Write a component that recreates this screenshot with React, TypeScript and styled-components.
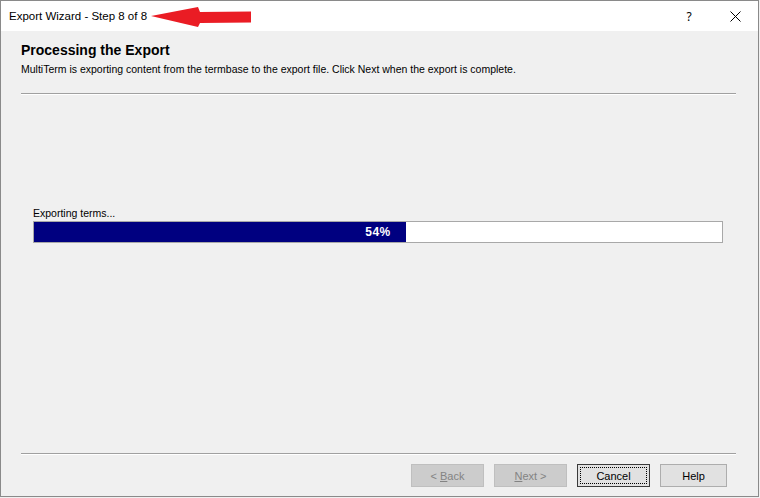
import React from "react";
import styled, { createGlobalStyle } from "styled-components";

const Global = createGlobalStyle`
  html, body { margin: 0; padding: 0; background: #f0f0f0; }
  body { width: 760px; height: 498px; overflow: hidden; }
  #root { width: 760px; height: 498px; }
`;

const Window = styled.div`
  box-sizing: border-box;
  width: 759px;
  height: 497px;
  border: 1px solid #8a8a8a;
  display: flex;
  flex-direction: column;
  background: #f0f0f0;
  font-family: "Liberation Sans", Arial, sans-serif;
  color: #000;
`;

const TitleBar = styled.div`
  height: 30px;
  flex: none;
  background: #ffffff;
  display: flex;
  align-items: center;
  padding-left: 8px;
`;

const TitleText = styled.span`
  font-family: "Liberation Sans", Arial, sans-serif;
  font-size: 11.5px;
  color: #000;
`;

const Arrow = styled.svg`
  margin-left: 3px;
  flex: none;
`;

const TitleButtons = styled.div`
  margin-left: auto;
  display: flex;
  height: 100%;
`;

const CaptionButton = styled.div`
  width: 46px;
  height: 100%;
  display: flex;
  align-items: center;
  justify-content: center;
  font-family: "Noto Sans", sans-serif;
  font-size: 12px;
  color: #000;
`;

const Body = styled.div`
  flex: 1;
  display: flex;
  flex-direction: column;
  padding: 0 22px 0 20px;
`;

const Header = styled.div`
  padding-top: 11px;
`;

const Heading = styled.h1`
  margin: 0;
  font-size: 14px;
  line-height: 17px;
  font-weight: bold;
`;

const Subtitle = styled.p`
  margin: 4px 0 0;
  font-size: 10.5px;
  line-height: 13px;
`;

const Rule = styled.div`
  height: 1px;
  background: #a0a0a0;
  border-bottom: 1px solid #ffffff;
`;

const HeaderRule = styled(Rule)`
  margin-top: 17px;
`;

const Content = styled.div`
  flex: 1;
  padding: 112px 13px 0 12px;
`;

const Label = styled.div`
  font-size: 10.5px;
  line-height: 13px;
  margin-bottom: 1px;
`;

const Track = styled.div`
  position: relative;
  box-sizing: border-box;
  height: 22px;
  border: 1px solid #a8a8a8;
  background: #ffffff;
  display: flex;
`;

const Fill = styled.div`
  height: 100%;
  background: #000080;
`;

const Percent = styled.span`
  position: absolute;
  inset: 0;
  display: flex;
  align-items: center;
  justify-content: center;
  color: #ffffff;
  font-size: 12px;
  font-weight: bold;
  letter-spacing: 0.5px;
`;

const Footer = styled.div`
  display: flex;
  justify-content: flex-end;
  gap: 10px;
  padding: 9px 9px 9px 0;
`;

const Button = styled.button<{ $w?: number; $default?: boolean }>`
  box-sizing: border-box;
  width: ${(p) => p.$w ?? 73}px;
  height: 23px;
  padding: 0;
  font-family: "Liberation Sans", Arial, sans-serif;
  font-size: 11px;
  background: #e1e1e1;
  color: #000;
  border: 1px solid ${(p) => (p.$default ? "#3a3a3a" : "#adadad")};
  position: relative;
  &:disabled {
    background: #cccccc;
    border-color: #bfbfbf;
    color: #838383;
  }
  ${(p) =>
    p.$default &&
    `
    &::after {
      content: "";
      position: absolute;
      inset: 2px;
      border: 1px dotted #000;
    }
  `}
`;

const Key = styled.span`
  text-decoration: underline;
`;

export default function App() {
  const progress = 54;
  return (
    <>
      <Global />
      <Window>
        <TitleBar>
          <TitleText>Export Wizard - Step 8 of 8</TitleText>
          <Arrow width="102" height="24" viewBox="0 0 102 24">
            <path d="M1 12 L48 3 L50 8 L101 7.5 L101 18.5 L50 19 L48 23 Z" fill="#ea1c24" />
          </Arrow>
          <TitleButtons>
            <CaptionButton>?</CaptionButton>
            <CaptionButton>
              <svg width="11" height="11" viewBox="0 0 11 11">
                <path d="M0.5 0.5 L10.5 10.5 M10.5 0.5 L0.5 10.5" stroke="#000" strokeWidth="1" />
              </svg>
            </CaptionButton>
          </TitleButtons>
        </TitleBar>
        <Body>
          <Header>
            <Heading>Processing the Export</Heading>
            <Subtitle>
              MultiTerm is exporting content from the termbase to the export file. Click Next when the export is complete.
            </Subtitle>
            <HeaderRule />
          </Header>
          <Content>
            <Label>Exporting terms...</Label>
            <Track>
              <Fill style={{ width: `${progress}%` }} />
              <Percent>{progress}%</Percent>
            </Track>
          </Content>
          <Rule />
          <Footer>
            <Button disabled>
              &lt; <Key>B</Key>ack
            </Button>
            <Button disabled>
              <Key>N</Key>ext &gt;
            </Button>
            <Button $default>Cancel</Button>
            <Button $w={67}>Help</Button>
          </Footer>
        </Body>
      </Window>
    </>
  );
}
